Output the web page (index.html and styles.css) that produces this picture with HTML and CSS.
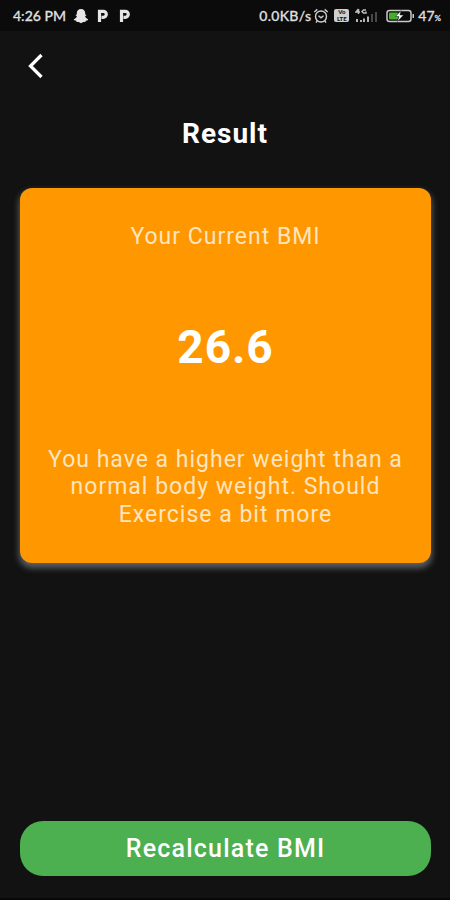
FILE: index.html
```html
<!DOCTYPE html>
<html lang="en">
<head>
  <meta charset="UTF-8" />
  <meta name="viewport" content="width=device-width, initial-scale=1" />
  <title>BMI Calculator - Result</title>
  <link rel="stylesheet" href="styles.css">
</head>
<body>

  <div class="screen">
    <!-- Status bar -->
    <div class="status-bar">
      <span class="status-time">4:26 PM</span>
      <svg class="icon-ghost" width="16" height="16" viewBox="0 0 16 16">
        <path d="M8 1C5.400 1 3.800 2.700 3.800 5v1.600L2.400 7l1.500 1.300C3.500 9.700 2.300 10.800.8 11.300l.4 1 2 .5.5 1.300 2-.1L8 15.200l2.300-1.200 2 .1.500-1.300 2-.5.4-1c-1.500-.5-2.700-1.600-3.100-3L13.600 7l-1.400-.4V5C12.200 2.700 10.600 1 8 1z" fill="#e6e6e6" />
      </svg>
      <svg class="icon-p" width="12" height="14" viewBox="0 0 12 14">
        <path d="M2.500 13V2.300h3.800a3 3 0 0 1 0 6H4.500" fill="none" stroke="#e6e6e6" stroke-width="3.200" />
      </svg>
      <svg class="icon-p" width="12" height="14" viewBox="0 0 12 14">
        <path d="M2.500 13V2.300h3.800a3 3 0 0 1 0 6H4.500" fill="none" stroke="#e6e6e6" stroke-width="3.200" />
      </svg>

      <span class="status-speed">0.0KB/s</span>
      <svg class="icon-alarm" width="16" height="16" viewBox="0 0 16 16" fill="none" stroke="#cfcfcf" stroke-width="1.400">
        <circle cx="8" cy="8.500" r="5.500" />
        <path d="M1.300 4l3-2.600M14.700 4l-3-2.600M5.500 7.700L8 9.800l2.500-2.100M4.200 13l-1.200 1.700M11.800 13l1.200 1.700" />
      </svg>
      <span class="volte"><span>Vo</span><span>LTE</span></span>
      <svg class="icon-signal" width="25" height="16" viewBox="0 0 25 16">
        <path d="M3.500 1L1 4h4M3.500 1v5M11 2H8.500L7 3.500 8.500 5H11V3.500" fill="none" stroke="#bdbdbd" stroke-width="1.500" />
        <path d="M1 11h2v3H1zM5 12h2v2H5zM8 10.500h2V14H8zM12 8.500h2V14h-2z" fill="#b5b5b5" />
        <path d="M16 6h2v8h-2zM20 4h2v10h-2z" fill="#484848" />
      </svg>
      <svg class="icon-battery" width="30" height="14" viewBox="0 0 30 14">
        <rect x="1" y="1.500" width="24" height="11" rx="2.500" fill="none" stroke="#c9c9c9" stroke-width="1.500" />
        <rect x="3" y="3.500" width="9" height="7" rx="1" fill="#43b02a" />
        <path d="M26.500 5h1.500v4h-1.500z" fill="#c9c9c9" />
        <path d="M15 1.500L9.500 7.500h3.300L11.500 12.500l6-6.500h-3.500z" fill="#fff" stroke="#111" stroke-width=".5" />
      </svg>
      <span class="status-percent">47<small>%</small></span>
    </div>

    <!-- App bar -->
    <div class="app-bar">
      <button class="back-button" aria-label="Back">
        <svg width="16" height="26" viewBox="0 0 16 26">
          <path d="M13.500 2L2.500 13l11 11" fill="none" stroke="#fff" stroke-width="3.200" />
        </svg>
      </button>
    </div>

    <h1 class="title">Result</h1>

    <!-- Result card -->
    <div class="result-card">
      <p class="label">Your Current BMI</p>
      <p class="bmi-value">26.6</p>
      <p class="message">You have a higher weight than a normal body weight. Should Exercise a bit more</p>
    </div>

    <button class="recalculate-button">Recalculate BMI</button>
  </div>

</body>
</html>
```
FILE: styles.css
```css
* {
  margin: 0;
  padding: 0;
  box-sizing: border-box;
}

body {
  font-family: Roboto, sans-serif;
  background: #121212;
  color: #fff;
}

button {
  border: none;
  background: none;
  color: inherit;
  font-family: inherit;
  cursor: pointer;
}

.screen {
  display: flex;
  flex-direction: column;
  height: 900px;
  padding-bottom: 22px;
  overflow: hidden;
  border-bottom: 2px solid #080808;
}

/* Status bar */
.status-bar {
  display: flex;
  align-items: center;
  height: 31px;
  padding: 0 9px 0 13px;
  background: #0b0b0b;
  font-family: Lato, sans-serif;
  font-size: 14px;
  font-weight: 500;
  color: #dedede;
  white-space: nowrap;
  -webkit-text-stroke: 0.3px #dedede;
}
.status-time {
  width: 53px;
}
.icon-ghost {
  margin-left: 7px;
}
.icon-p {
  margin-left: 8px;
}
.icon-p + .icon-p {
  margin-left: 10px;
}
.status-speed {
  margin-left: auto;
  letter-spacing: 0.3px;
}
.icon-alarm {
  margin-left: 2px;
}
.volte {
  display: flex;
  flex-direction: column;
  align-items: center;
  width: 15px;
  height: 13px;
  margin-left: 5px;
  border-radius: 2px;
  background: #cfcfcf;
  color: #111;
  font-size: 6px;
  font-weight: 900;
  line-height: 6.5px;
  -webkit-text-stroke: 0;
}
.icon-signal {
  margin-left: 6px;
}
.icon-battery {
  margin-left: 6px;
}
.status-percent {
  margin-left: 2px;
}
.status-percent small {
  font-size: 8px;
}

/* App bar */
.app-bar {
  display: flex;
  align-items: center;
  height: 69px;
  padding-left: 28px;
}
.back-button {
  display: flex;
}

.title {
  margin-top: 17px;
  font-size: 28px;
  font-weight: 700;
  line-height: 33px;
  letter-spacing: 1px;
  text-align: center;
}

/* Result card */
.result-card {
  display: flex;
  flex-direction: column;
  align-items: center;
  height: 375px;
  margin: 38px 19px 0 20px;
  padding: 35px 20px;
  border-radius: 12px;
  background: #ff9800;
  box-shadow: 0 4px 6px 1px #5c6064;
  text-align: center;
}
.label,
.message {
  color: rgba(255, 255, 255, 0.76);
  font-size: 23px;
  line-height: 27.5px;
  letter-spacing: 1px;
}
.bmi-value {
  margin: 68px 0 71px;
  font-size: 46px;
  font-weight: 700;
  line-height: 56px;
  letter-spacing: 1px;
}

.recalculate-button {
  height: 55px;
  margin: auto 19px 0 20px;
  border-radius: 23px;
  background: #4caf50;
  font-size: 25px;
  font-weight: 500;
  letter-spacing: 1.2px;
}
```
